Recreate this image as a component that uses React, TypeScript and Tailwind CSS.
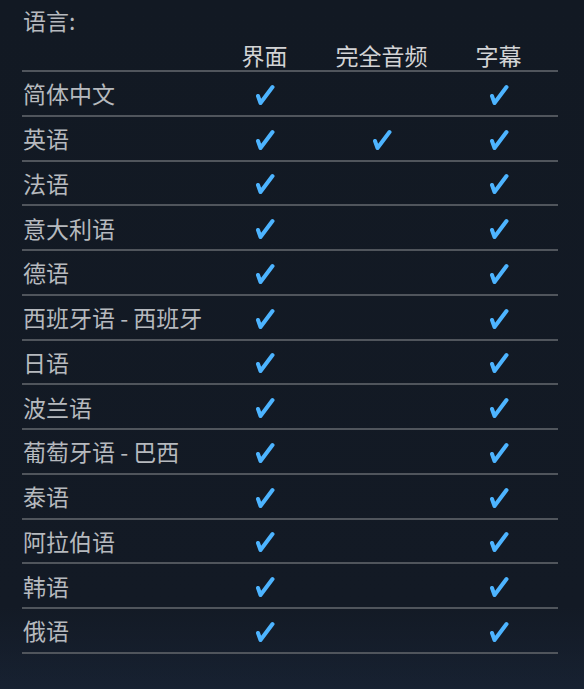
import React from "react";

const rows: [string, boolean, boolean, boolean][] = [
  ["简体中文", true, false, true],
  ["英语", true, true, true],
  ["法语", true, false, true],
  ["意大利语", true, false, true],
  ["德语", true, false, true],
  ["西班牙语 - 西班牙", true, false, true],
  ["日语", true, false, true],
  ["波兰语", true, false, true],
  ["葡萄牙语 - 巴西", true, false, true],
  ["泰语", true, false, true],
  ["阿拉伯语", true, false, true],
  ["韩语", true, false, true],
  ["俄语", true, false, true],
];

function Check() {
  return (
    <svg width="21" height="22" viewBox="0 0 21 22" className="block">
      <path
        d="M4 12 L6.5 19 L18.5 3"
        fill="none"
        stroke="#4db4ff"
        strokeWidth="4"
        strokeLinecap="round"
        strokeLinejoin="round"
      />
    </svg>
  );
}

export default function App() {
  return (
    <div
      className="w-[584px] h-[689px] overflow-hidden bg-[linear-gradient(180deg,#121923_0%,#131a25_88%,#18233333_100%),linear-gradient(180deg,#121923,#172131)] pl-[22px] pr-[26px] pt-[6px] text-[23px] leading-[28px] text-[#b6b9be]"
      style={{ fontFamily: '"Noto Sans CJK SC", "Noto Sans", sans-serif' }}
    >
      <div className="pl-[1px] h-[30px]">语言:</div>
      <div className="grid grid-cols-[184px_117px_117px_117px] h-[36px] items-end pb-[1px] border-b-2 border-[#50555c] text-[#d2d3d5]">
        <div></div>
        <div className="text-center">界面</div>
        <div className="text-center">完全音频</div>
        <div className="text-center">字幕</div>
      </div>
      {rows.map(([name, a, b, c]) => (
        <div
          key={name}
          className="grid grid-cols-[184px_117px_117px_117px] h-[44.75px] items-center border-b-2 border-[#50555c]"
        >
          <div className="pl-[1px] whitespace-nowrap">{name}</div>
          <div className="flex justify-center pt-[3px]">{a && <Check />}</div>
          <div className="flex justify-center pt-[3px]">{b && <Check />}</div>
          <div className="flex justify-center pt-[3px]">{c && <Check />}</div>
        </div>
      ))}
    </div>
  );
}
